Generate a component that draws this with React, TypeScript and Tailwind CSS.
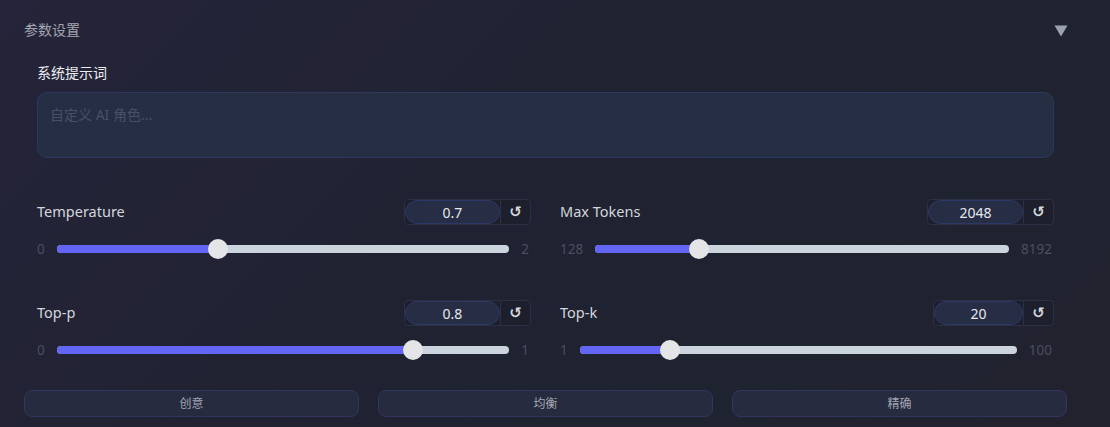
import React from "react";

type P = {
  label: string;
  value: string;
  min: string;
  max: string;
  frac: number;
  inputW: number;
};

function Param({ label, value, min, max, frac, inputW }: P) {
  return (
    <div className="flex flex-col">
      <div className="flex h-[26px] items-center justify-between">
        <span className="mt-[-2px] text-[14.5px] leading-[20px] text-[#d4d6dd]">{label}</span>
        <div className="flex h-[26px] items-stretch rounded-[4px] border border-[#2b3045] bg-[#1d1f2c]">
          <div
            className="flex items-center justify-center rounded-full border border-[#2c3866] bg-[#262d44] text-[14px] text-[#e6e8ee]"
            style={{ width: inputW }}
          >
            {value}
          </div>
          <div className="flex w-[30px] items-center justify-center border-l border-[#2b3045] text-[15px] font-bold text-[#d4d6dd] [font-family:'DejaVu_Sans',sans-serif]">
            ↺
          </div>
        </div>
      </div>
      <div className="mt-[14px] flex h-[20px] items-center gap-[12px]">
        <span className="text-[13.5px] text-[#4a4f60]">{min}</span>
        <div className="relative h-[8px] flex-1 rounded-full bg-[#cbd3dc]">
          <div
            className="absolute left-0 top-0 h-[8px] rounded-full bg-[#6366f4]"
            style={{ width: `calc(10px + (100% - 20px) * ${frac})` }}
          />
          <div
            className="absolute top-[-6px] h-[20px] w-[20px] rounded-full bg-[#e4e5e7]"
            style={{ left: `calc((100% - 20px) * ${frac})` }}
          />
        </div>
        <span className="mr-[2px] text-[13.5px] text-[#4a4f60]">{max}</span>
      </div>
    </div>
  );
}

export default function App() {
  return (
    <div
      className="h-[427px] w-[1110px] overflow-hidden bg-[linear-gradient(135deg,#25243a_0%,#202231_45%,#1f2330_70%,#23222f_100%)] px-[24px] pt-[20px] text-[#e5e7eb]"
      style={{ fontFamily: "'Noto Sans', 'Noto Sans CJK SC', sans-serif" }}
    >
      <div className="flex h-[20px] w-[1044px] items-center justify-between">
        <span className="text-[14px] leading-[20px] text-[#a3a6b1]">参数设置</span>
        <svg width="14" height="12" viewBox="0 0 14 12" className="mt-[1px]">
          <polygon points="0.5,0.5 13.5,0.5 7,11.5" fill="#9ca1ad" />
        </svg>
      </div>
      <div className="mt-[23px] w-[1043px] px-[13px]">
        <div className="h-[20px] text-[14px] leading-[20px] text-[#eceef2]">系统提示词</div>
        <div className="mt-[9px] h-[66px] rounded-[10px] border border-[#2d3860] bg-[#262e44] px-[12px] pt-[12px] text-[14px] leading-[20px] text-[#485068]">
          自定义 AI 角色...
        </div>
        <div className="mt-[41px] grid grid-cols-2 gap-x-[29px] gap-y-[41px]">
          <Param label="Temperature" value="0.7" min="0" max="2" frac={0.35} inputW={95} />
          <Param label="Max Tokens" value="2048" min="128" max="8192" frac={(2048 - 128) / 8064} inputW={95} />
          <Param label="Top-p" value="0.8" min="0" max="1" frac={0.8} inputW={95} />
          <Param label="Top-k" value="20" min="1" max="100" frac={19 / 99} inputW={89} />
        </div>
      </div>
      <div className="mt-[30px] grid w-[1043px] grid-cols-3 gap-x-[19px]">
        {["创意", "均衡", "精确"].map((t) => (
          <div
            key={t}
            className="flex h-[27px] items-center justify-center rounded-[8px] border border-[#30365e] bg-[#272b40] text-[12px] text-[#a3a7b3]"
          >
            {t}
          </div>
        ))}
      </div>
    </div>
  );
}
